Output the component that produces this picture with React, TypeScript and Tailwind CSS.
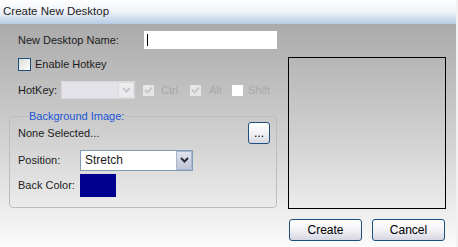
import React from "react"

function Chevron({ color }: { color: string }) {
  return (
    <svg width="9" height="6" viewBox="0 0 9 6">
      <polyline points="1,1 4.5,4.5 8,1" fill="none" stroke={color} strokeWidth="2" />
    </svg>
  )
}

function Check({ color }: { color: string }) {
  return (
    <svg width="9" height="8" viewBox="0 0 9 8">
      <polyline points="1,4 3.5,6.5 8,1.5" fill="none" stroke={color} strokeWidth="1.8" />
    </svg>
  )
}

function XpButton({ label, className }: { label: string; className: string }) {
  return (
    <button
      className={`h-[22px] shrink-0 rounded-[3px] border border-[#1f4f7c] bg-gradient-to-b from-white via-[#f2f2f5] to-[#d5d6e2] text-[12px] text-black ${className}`}
    >
      {label}
    </button>
  )
}

export default function App() {
  return (
    <div className="w-[458px] h-[247px] flex flex-col overflow-hidden border-r-2 border-[#f2f2f2] font-['Liberation_Sans',Arial,sans-serif] text-[11px] text-[#1c1c1c] whitespace-nowrap">
      <div className="h-[24px] shrink-0 flex items-center pl-[3px] text-[11.5px] bg-gradient-to-b from-white via-[#eef2f8] to-[#b6cbe4]">
        Create New Desktop
      </div>

      <div className="flex-1 flex bg-gradient-to-b from-[#ababab] via-[#d0d0d0] to-[#fbfbfb]">
        {/* left column */}
        <div className="w-[288px] shrink-0 pl-[9px] flex flex-col">
          <div className="mt-[7px] h-[18px] pl-[9px] flex items-center">
            <span className="w-[126px] shrink-0">New Desktop Name:</span>
            <div className="w-[133px] h-[18px] shrink-0 bg-white flex items-center pl-[3px]">
              <div className="w-px h-[12px] bg-black" />
            </div>
          </div>

          <div className="mt-[8px] h-[15px] pl-[9px] flex items-center">
            <div className="w-[13px] h-[13px] shrink-0 border border-[#1c5180] bg-gradient-to-br from-[#dcdcd6] to-white" />
            <span className="ml-[4px]">Enable Hotkey</span>
          </div>

          <div className="mt-[9px] h-[18px] pl-[9px] flex items-center">
            <span className="w-[43px] shrink-0">HotKey:</span>
            <div className="w-[74px] h-[18px] shrink-0 bg-[#e2e2e8] border border-[#d8d8dc] flex justify-end">
              <div className="w-[16px] h-full bg-[#ececee] border border-[#dcdcdc] flex items-center justify-center">
                <Chevron color="#c8c8cc" />
              </div>
            </div>
            <div className="ml-[8px] w-[11px] h-[11px] shrink-0 bg-[#e6e6e6] flex items-center justify-center">
              <Check color="#c4c4c4" />
            </div>
            <span className="ml-[7px] w-[29px] shrink-0 text-[#a8a8a8]">Ctrl</span>
            <div className="w-[11px] h-[11px] shrink-0 bg-[#e6e6e6] flex items-center justify-center">
              <Check color="#c4c4c4" />
            </div>
            <span className="ml-[8px] w-[23px] shrink-0 text-[#a8a8a8]">Alt</span>
            <div className="w-[11px] h-[11px] shrink-0 bg-white" />
            <span className="ml-[5px] text-[#a8a8a8]">Shift</span>
          </div>

          <fieldset className="mt-[9px] w-[268px] h-[100px] border border-[#bdbdbd] rounded-[4px] pl-[8px] pr-[6px]">
            <legend className="ml-[10px] px-[1px] text-[#1a55d6]">Background Image:</legend>
            <div className="-mt-[2px] h-[21px] flex items-center justify-between">
              <span>None Selected...</span>
              <XpButton label="..." className="w-[22px] leading-[14px]" />
            </div>
            <div className="mt-[6px] h-[21px] flex items-center">
              <span className="w-[62px] shrink-0">Position:</span>
              <div className="w-[113px] h-[21px] shrink-0 bg-white border border-[#7f9db9] flex items-center justify-between">
                <span className="pl-[4px] text-[12px]">Stretch</span>
                <div className="w-[16px] h-[19px] bg-gradient-to-b from-[#dfe3ee] to-[#bfc6d8] border border-[#a9b5cc] flex items-center justify-center">
                  <Chevron color="#2b2b3a" />
                </div>
              </div>
            </div>
            <div className="mt-[3px] h-[23px] flex items-center">
              <span className="w-[62px] shrink-0">Back Color:</span>
              <div className="w-[36px] h-[23px] shrink-0 bg-[#00008f]" />
            </div>
          </fieldset>
        </div>

        {/* right column */}
        <div className="flex flex-col pt-[33px]">
          <div className="w-[158px] h-[152px] border border-black" />
          <div className="mt-[10px] flex gap-[10px] pl-px">
            <XpButton label="Create" className="w-[73px]" />
            <XpButton label="Cancel" className="w-[73px]" />
          </div>
        </div>
      </div>
    </div>
  )
}
